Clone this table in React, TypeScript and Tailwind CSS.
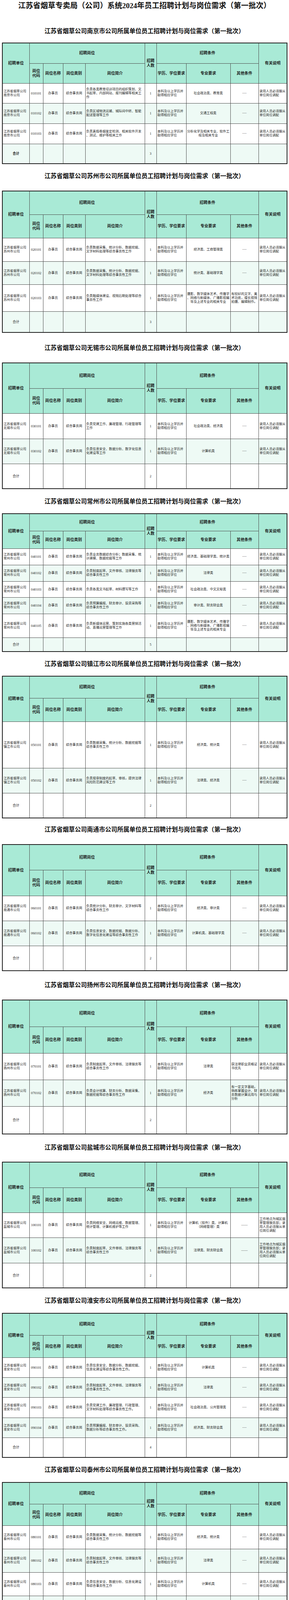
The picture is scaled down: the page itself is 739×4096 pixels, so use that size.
const cols = ['w-[69px]', 'w-[35px]', 'w-[51px]', 'w-[57px]', 'w-[152px]', 'w-[30px]', 'w-[76px]', 'w-[113px]', 'w-[72px]', 'w-[73px]'];

const NOTE = '录用人员必须服从单位岗位调配';
const EDU = '本科及以上学历并取得相应学位';

type Item = { code: string; intro: string; major: string; other?: string; note?: string };

type Section = {
  city: string;
  block: string;
  pad: string;
  heads: [string, string];
  rows: string[];
  total: string;
  count: number;
  boldTotal?: boolean;
  items: Item[];
};

const sections: Section[] = [
  {
    city: '南京', block: 'h-[59px]', pad: 'pt-[20px]', heads: ['h-[52px]', 'h-[51px]'],
    rows: ['h-[51px]', 'h-[52px]', 'h-[52px]'], total: 'h-[51px]', count: 3, boldTotal: true,
    items: [
      { code: '010101', intro: '负责各类教育培训项目的组织策划、文书起草、内部网站、报刊编辑等相关工作', major: '社会政治类、教育类' },
      { code: '010102', intro: '负责区域物流运输、城际间中转、智能配送管理等工作', major: '交通工程类' },
      { code: '010103', intro: '负责真假卷烟鉴定检测、相关软件开发、测试、维护等相关工作', major: '分析化学及相关专业、软件工程及相关专业' },
    ],
  },
  {
    city: '苏州', block: 'h-[68px]', pad: 'pt-[21px]', heads: ['h-[60px]', 'h-[60px]'],
    rows: ['h-[60px]', 'h-[59px]', 'h-[69px]'], total: 'h-[54px]', count: 3,
    items: [
      { code: '020101', intro: '负责数据采集、统计分析、数据挖掘、文字材料处理等综合事务性工作', major: '经济类、工商管理类' },
      { code: '020102', intro: '负责数据采集、统计分析、数据挖掘、文字材料处理等综合事务性工作', major: '统计类、基础理学类' },
      {
        code: '020103', intro: '负责融媒体建设、视频后期处理等综合事务性工作',
        major: '摄影、数字媒体艺术、传播学、网络与新媒体、广播影视编导及上述专业的相关专业',
        other: '有较好的文字、美术功底，擅长视频拍摄、编辑制作。',
      },
    ],
  },
  {
    city: '无锡', block: 'h-[76px]', pad: 'pt-[29px]', heads: ['h-[65px]', 'h-[64px]'],
    rows: ['h-[65px]', 'h-[64px]'], total: 'h-[64px]', count: 2,
    items: [
      { code: '030101', intro: '负责党建工作、廉政管理、行政管理等工作', major: '社会政治类、经济类' },
      { code: '030102', intro: '负责信息安全、数据分析、数字化信息化建设等工作', major: '计算机类' },
    ],
  },
  {
    city: '常州', block: 'h-[62px]', pad: 'pt-[22px]', heads: ['h-[44px]', 'h-[45px]'],
    rows: ['h-[42px]', 'h-[42px]', 'h-[41px]', 'h-[42px]', 'h-[61px]'], total: 'h-[36px]', count: 5,
    items: [
      { code: '040101', intro: '负责业务数据综合分析；数据采集、统计建模、数据挖掘等工作', major: '经济类、基础理学类、统计类' },
      { code: '040102', intro: '负责制度起草、文件审核、法律服务等综合事务性工作', major: '法律类' },
      { code: '040103', intro: '负责各类文书起草、材料撰写等工作', major: '社会政治类、中文文秘类' },
      { code: '040104', intro: '负责预算编报、财务审计、投资采购等综合事务性工作', major: '审计类、财务财会类' },
      {
        code: '040105', intro: '负责新媒体运营、策划实施各类营销活动、直播运营管理等工作',
        major: '摄影、数字媒体艺术、传播学、网络与新媒体、广播影视编导及上述专业的相关专业',
      },
    ],
  },
  {
    city: '镇江', block: 'h-[61px]', pad: 'pt-[21px]', heads: ['h-[56px]', 'h-[60px]'],
    rows: ['h-[119px]', 'h-[64px]'], total: 'h-[64px]', count: 2,
    items: [
      { code: '050101', intro: '负责数据采集、统计分析、数据挖掘等综合事务性工作', major: '经济类、统计类' },
      { code: '050102', intro: '负责规章制度的起草、审核，提供法律风险防范建议等工作', major: '法律类、经济类' },
    ],
  },
  {
    city: '南通', block: 'h-[66px]', pad: 'pt-[19px]', heads: ['h-[65px]', 'h-[66px]'],
    rows: ['h-[64px]', 'h-[64px]'], total: 'h-[64px]', count: 2,
    items: [
      { code: '060101', intro: '负责统计分析、财务审计、文字材料等综合事务性工作', major: '经济类、审计类' },
      { code: '060102', intro: '负责信息安全、数据挖掘、数据分析、数字化信息化建设等综合事务性工作', major: '计算机类、基础理学类' },
    ],
  },
  {
    city: '扬州', block: 'h-[73px]', pad: 'pt-[26px]', heads: ['h-[68px]', 'h-[68px]'],
    rows: ['h-[68px]', 'h-[68px]'], total: 'h-[71px]', count: 2,
    items: [
      { code: '070101', intro: '负责制度起草、文件审核、法律服务等综合事务性工作', major: '法律类', other: '获法律职业资格证书优先' },
      {
        code: '070102', intro: '负责会计核算、财务分析、数据采集、数据挖掘等综合事务性工作', major: '经济类',
        other: '有一定文字基础，\n熟练掌握会计、财务数据计算运用与分析',
      },
    ],
  },
  {
    city: '盐城', block: 'h-[70px]', pad: 'pt-[24px]', heads: ['h-[65px]', 'h-[64px]'],
    rows: ['h-[64px]', 'h-[65px]'], total: 'h-[64px]', count: 2,
    items: [
      {
        code: '100101', intro: '负责网络安全、网络运维、数据管理、统计管理、计算机维护等工作',
        major: '计算机（软件）类、计算机\n（网络管理）类', other: '——', note: '工作地点为城区烟草管理服务部；录用人员必须服从单位岗位调配',
      },
      {
        code: '100102', intro: '负责制度起草、文件审核、法律服务等综合事务性工作',
        major: '法律类、财务财会类', other: '——', note: '工作地点为城区烟草管理服务部；录用人员必须服从单位岗位调配',
      },
    ],
  },
  {
    city: '淮安', block: 'h-[63px]', pad: 'pt-[22px]', heads: ['h-[56px]', 'h-[57px]'],
    rows: ['h-[51px]', 'h-[51px]', 'h-[52px]', 'h-[51px]'], total: 'h-[51px]', count: 4,
    items: [
      { code: '090101', intro: '负责信息安全、数据分析、数据挖掘、信息化建设等综合事务性工作。', major: '计算机类' },
      { code: '090102', intro: '负责制度起草、文件审核、法律服务等综合事务性工作。', major: '法律类' },
      { code: '090103', intro: '负责党建工作、廉政管理、行政管理、文字材料处理等综合事务性工作。', major: '社会政治类、公共管理类' },
      { code: '090104', intro: '负责预算编报、财务审计、投资采购、数据分析等综合事务性工作。', major: '经济类、财务财会类' },
    ],
  },
  {
    city: '泰州', block: 'h-[62px]', pad: 'pt-[21px]', heads: ['h-[55px]', 'h-[55px]'],
    rows: ['h-[60px]', 'h-[60px]', 'h-[60px]'], total: 'h-[60px]', count: 3,
    items: [
      { code: '080101', intro: '负责数据采集、统计分析、数据挖掘等综合事务性工作', major: '经济类、统计类' },
      { code: '080102', intro: '负责制度起草、文件审核、法律服务等综合事务性工作', major: '法律类' },
      { code: '080103', intro: '负责信息安全、数据分析、信息化建设等综合事务性工作', major: '计算机类' },
    ],
  },
];

const cell = 'border border-[#4a4a4a] px-[2px] align-middle';
const th = `${cell} text-center font-bold text-[10px] leading-[12px]`;
const td = `${cell} text-[8.3px] leading-[10px] [line-break:anywhere]`;

function RecruitTable({ s }: { s: Section }) {
  return (
    <table className="ml-[5px] w-[728px] table-fixed border-collapse border-2 border-[#1f1f1f] text-[#1c1c1c]">
      <colgroup>
        {cols.map((c, i) => (
          <col key={i} className={c} />
        ))}
      </colgroup>
      <thead className="bg-[#a9ead6]">
        <tr className={s.heads[0]}>
          <th rowSpan={2} className={th}>招聘单位</th>
          <th colSpan={4} className={th}>招聘岗位</th>
          <th rowSpan={2} className={th}>招聘<br />人数</th>
          <th colSpan={3} className={th}>招聘条件</th>
          <th rowSpan={2} className={th}>有关说明</th>
        </tr>
        <tr className={s.heads[1]}>
          <th className={th}>岗位<br />代码</th>
          <th className={`${th} whitespace-nowrap`}>岗位名称</th>
          <th className={`${th} whitespace-nowrap`}>岗位类别</th>
          <th className={th}>岗位简介</th>
          <th className={`${th} whitespace-nowrap`}>学历、学位要求</th>
          <th className={th}>专业要求</th>
          <th className={th}>其他条件</th>
        </tr>
      </thead>
      <tbody>
        {s.items.map((r, i) => {
          const other = r.other ?? '----';
          const dash = other === '----' || other === '——';
          return (
            <tr key={r.code} className={`${s.rows[i]} ${i % 2 ? 'bg-[#eefaf5]' : 'bg-white'}`}>
              <td className={`${td} whitespace-nowrap`}>江苏省烟草公司<br />{s.city}市公司</td>
              <td className={`${td} text-center text-[8.8px]`}>{r.code}</td>
              <td className={`${td} text-center`}>办事员</td>
              <td className={`${td} text-center whitespace-nowrap`}>综合事务岗</td>
              <td className={td}>{r.intro}</td>
              <td className={`${td} text-center text-[8.8px]`}>1</td>
              <td className={td}>{EDU}</td>
              <td className={`${td} text-center whitespace-pre-line`}>{r.major}</td>
              <td className={`${td} whitespace-pre-line ${dash ? 'text-center text-[#555]' : ''}`}>{other}</td>
              <td className={td}>{r.note ?? NOTE}</td>
            </tr>
          );
        })}
        <tr className={`${s.total} ${s.items.length % 2 ? 'bg-[#eefaf5]' : 'bg-white'}`}>
          <td className={`${td} text-center text-[8.6px] ${s.boldTotal ? 'font-bold' : ''}`}>合计</td>
          <td className={td} />
          <td className={td} />
          <td className={td} />
          <td className={td} />
          <td className={`${td} text-center text-[8.8px]`}>{s.count}</td>
          <td className={td} />
          <td className={td} />
          <td className={td} />
          <td className={td} />
        </tr>
      </tbody>
    </table>
  );
}

export default function App() {
  return (
    <div className="h-[4096px] w-[739px] overflow-hidden bg-white font-['Liberation_Serif','Noto_Sans_CJK_SC',serif] text-[#111]">
      <div className="h-[50px] pt-[2px] text-center text-[19px] font-bold leading-[26px]">
        江苏省烟草专卖局（公司）系统2024年员工招聘计划与岗位需求（第一批次）
      </div>
      {sections.map((s) => (
        <section key={s.city}>
          <div className={`${s.block} ${s.pad} text-center text-[15.5px] font-bold leading-[20px]`}>
            江苏省烟草公司{s.city}市公司所属单位员工招聘计划与岗位需求（第一批次）
          </div>
          <RecruitTable s={s} />
        </section>
      ))}
    </div>
  );
}
